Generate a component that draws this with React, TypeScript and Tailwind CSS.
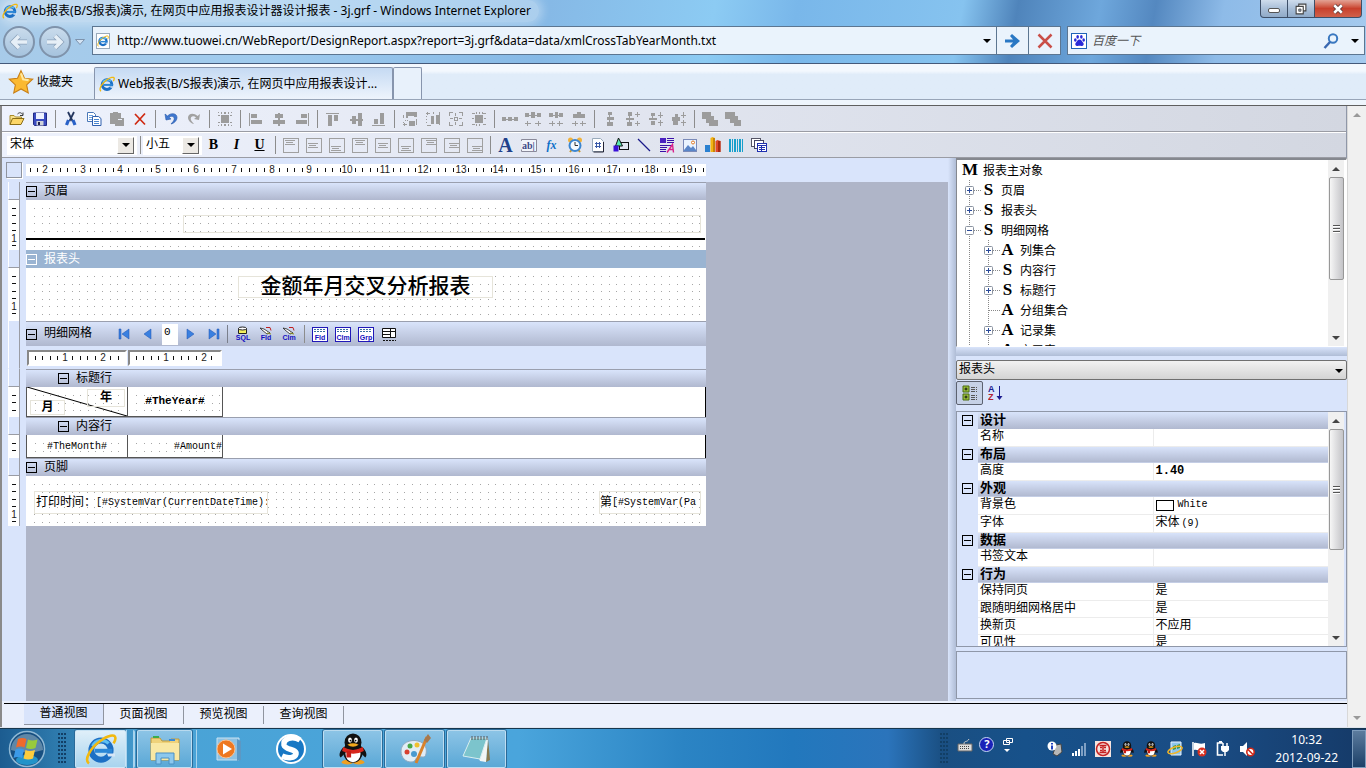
import { ReactNode, useState } from 'react';
import clsx from 'clsx';

const GRID = 7.56;
const song = "font-['Liberation_Mono','Noto_Sans_CJK_SC',monospace]";
const segoe = "font-['Noto_Sans','Noto_Sans_CJK_SC',sans-serif]";
const yahei = "font-['Noto_Sans_CJK_SC',sans-serif]";

/* ---------- icons ---------- */

function Icon({ children, size = 'w-4 h-4' }: { children: ReactNode; size?: string }) {
  return (
    <svg viewBox="0 0 16 16" className={clsx(size, 'shrink-0')} fill="none" aria-hidden="true">
      {children}
    </svg>
  );
}

function IeLogo({ size = 'w-4 h-4' }: { size?: string }) {
  return (
    <Icon size={size}>
      <circle cx="8" cy="8.6" r="4.8" stroke="#1c6fc4" strokeWidth="3" />
      <path d="M3.8 6.6a5 5 0 0 1 8-1.4" stroke="#5fc0f2" strokeWidth="1.6" />
      <path d="M5 8.9h8.6" stroke="#2a86d6" strokeWidth="2" />
      <path d="M11 10.2h4v1.6h-3.4z" fill="#d6e6f6" />
      <path d="M2 15.2C-.6 13.4 2.6 7.6 7.6 4 11.4 1.2 15 .4 15.2 2.4c.1.8-.3 1.8-.9 2.8" stroke="#f2b90f" strokeWidth="1.3" />
    </Icon>
  );
}

// grey pixel shapes of the disabled layout commands
const gray = (d: string) => (
  <Icon>
    <path d={d} fill="#9c9c9c" shapeRendering="crispEdges" />
  </Icon>
);

const bars = {
  left: 'M1 2h1v13h-1zM3 3h6v4h-6zM3 9h11v4h-11z',
  center: 'M7 2h2v13h-2zM4 3h8v4h-8zM2 9h12v4h-12z',
  right: 'M14 2h1v13h-1zM7 3h6v4h-6zM2 9h11v4h-11z',
  top: 'M1 2h13v1h-13zM3 4h4v11h-4zM9 4h4v6h-4z',
  middle: 'M2 8h13v2h-13zM4 5h4v8h-4zM10 2h4v13h-4z',
  bottom: 'M1 14h13v1h-13zM3 8h4v5h-4zM9 2h4v11h-4z',
};

const fileIcons = [
  {
    name: '打开',
    icon: (
      <Icon>
        <path d="M1 13.500V4.500h4l1.500 1.500h6v2" fill="#f7e08b" stroke="#a88a2a" />
        <path d="M1 13.500l2.500-6h11.500l-3 6z" fill="#fcd668" stroke="#8a6d17" />
        <path d="M8.500 3c2-2 4-1.500 5 .500M14 1.500v3h-3" stroke="#3c3c3c" />
      </Icon>
    ),
  },
  {
    name: '保存',
    icon: (
      <Icon>
        <path d="M1.500 2h13v12.500h-12l-1-1z" fill="#3a4cc0" stroke="#222a86" />
        <path d="M4 2h8v6h-8z" fill="#eef2ff" />
        <path d="M4.500 10h7v4.500h-7z" fill="#cfd3da" />
        <path d="M6 11h2v3h-2z" fill="#20204c" />
      </Icon>
    ),
  },
];

const editIcons = [
  {
    name: '剪切',
    icon: (
      <Icon>
        <path d="M5 1l4.500 9M11 1l-4.500 9" stroke="#24365e" strokeWidth="1.800" />
        <path d="M5.500 9l-2 5M10 9l2 5" stroke="#2a62c8" strokeWidth="3.200" />
      </Icon>
    ),
  },
  {
    name: '复制',
    icon: (
      <Icon>
        <path d="M1.500 1.500h6l2 2v7h-8z" fill="#fff" stroke="#4a78b8" />
        <path d="M3 4.500h4M3 6.500h5M3 8.500h4" stroke="#6fa0dc" />
        <path d="M6.500 5.500h6l2.500 2v7h-8.500z" fill="#fff" stroke="#2f5fae" />
        <path d="M8 8.500h5M8 10.500h5M8 12.500h5" stroke="#4a86d0" />
      </Icon>
    ),
  },
  { name: '粘贴', icon: gray('M1 2h3v-1h5v1h3v5h3v8h-9v-2h-5zM9 8v1h4v-1zM10 12h3v1h-3z') },
  {
    name: '删除',
    icon: (
      <Icon>
        <path d="M3 3l10 10.500M13 2.500L3 13.500" stroke="#cf2a12" strokeWidth="1.700" />
      </Icon>
    ),
  },
];

const undoIcons = [
  {
    name: '撤销',
    icon: (
      <Icon>
        <path d="M2 3l1 6 5-1-2-1.600c3-2.400 6.200-.4 5 2.600-.5 1.600-2 2.600-3 4 3-.6 6-3.400 6-6.500C14 2.500 8.500 1 4.500 5z" fill="#3f77cf" stroke="#2557a8" strokeWidth=".6" />
      </Icon>
    ),
  },
  {
    name: '重做',
    icon: (
      <Icon>
        <path d="M14 3l-1 6-5-1 2-1.600c-3-2.400-6.200-.4-5 2.600.5 1.600 2 2.600 3 4-3-.6-6-3.400-6-6.500C2 2.500 7.500 1 11.500 5z" fill="#a2a2a2" />
      </Icon>
    ),
  },
];

const boxIcon = gray(
  'M4 4h8v8h-8zM1 4h2v1h-2zM1 11h2v1h-2zM13 4h2v1h-2zM13 11h2v1h-2zM4 1h1v2h-1zM11 1h1v2h-1zM4 13h1v2h-1zM11 13h1v2h-1zM1 1h1v1h-1zM14 1h1v1h-1zM1 14h1v1h-1zM14 14h1v1h-1zM7 1h2v2h-2zM7 13h2v2h-2z',
);

type Tool = { name: string; icon: ReactNode };

const layoutGroups: Tool[][] = [
  [{ name: '选择', icon: boxIcon }],
  [
    { name: '左对齐', icon: gray(bars.left) },
    { name: '水平居中', icon: gray(bars.center) },
    { name: '右对齐', icon: gray(bars.right) },
  ],
  [
    { name: '顶对齐', icon: gray(bars.top) },
    { name: '垂直居中', icon: gray(bars.middle) },
    { name: '底对齐', icon: gray(bars.bottom) },
  ],
  [
    { name: '等宽', icon: gray('M4 1h11v5h-3v-1h-6v2h-2zM1 4h1v3h-1zM3 9h1v1h-1zM5 9h1v1h-1zM7 10h6v5h-6zM1 11h1v1h-1zM1 13h4v1h-4zM14 8h1v6h-1zM2 12h1v3h-1z') },
    { name: '等高', icon: gray('M11 4h3v9h-3zM14 1h1v13h-1zM6 5h3v8h-3zM1 2h4v1h-4zM2 1h1v3h-1zM1 5h1v1h-1zM1 8h1v1h-1zM1 11h1v1h-1zM2 14h4v1h-4zM8 1h1v2h-1z') },
    { name: '等大小', icon: gray('M1 1h4v1h-3v3h-1zM11 1h4v4h-1v-3h-3zM1 11h1v3h3v1h-4zM14 11h1v4h-4v-1h3zM6 6h4v1h-4zM6 9h4v1h-4zM6 7h1v2h-1zM9 7h1v2h-1zM7 2h1v3h-1zM7 11h1v3h-1zM2 7h3v1h-3zM11 7h3v1h-3z') },
    { name: '适应网格', icon: gray('M4 4h8v8h-8zM1 2h3v1h-3zM12 2h3v1h-3zM1 7h2v1h-2zM13 7h2v1h-2zM1 13h3v1h-3zM12 13h3v1h-3zM5 1h1v2h-1zM8 1h1v2h-1zM11 1h1v2h-1zM5 13h1v2h-1zM8 13h1v2h-1z') },
  ],
  [
    { name: '水平间距相等', icon: gray('M0 6h4v4h-4zM4 8h2v1h-2zM6 6h4v4h-4zM10 8h2v1h-2zM12 6h4v4h-4z') },
    { name: '增加水平间距', icon: gray('M0 2h4v4h-4zM4 4h2v1h-2zM6 1h4v6h-4zM10 4h2v1h-2zM12 2h4v4h-4zM0 12h6v1h-6zM2 10h1v5h-1zM10 12h6v1h-6zM13 10h1v5h-1z') },
    { name: '减小水平间距', icon: gray('M1 2h4v4h-4zM5 4h7v1h-7zM7 1h3v6h-3zM11 2h4v4h-4zM1 12h6v1h-6zM4 10h1v5h-1zM9 12h6v1h-6zM11 10h1v5h-1z') },
    { name: '移除水平间距', icon: gray('M2 3h4v4h-4zM6 1h4v6h-4zM10 3h4v4h-4zM1 12h6v1h-6zM4 10h1v5h-1zM9 12h6v1h-6zM11 10h1v5h-1z') },
  ],
  [
    { name: '垂直间距相等', icon: gray('M6 1h4v3h-4zM7 4h1v2h-1zM5 6h7v3h-7zM7 9h1v2h-1zM5 11h6v4h-6z') },
    { name: '增加垂直间距', icon: gray('M3 1h4v4h-4zM4 5h1v2h-1zM1 7h8v2h-8zM4 9h1v2h-1zM2 11h5v4h-5zM12 1h1v5h-1zM10 3h5v1h-5zM12 10h1v5h-1zM10 12h5v1h-5z') },
    { name: '减小垂直间距', icon: gray('M3 2h4v3h-4zM4 5h1v2h-1zM1 7h8v2h-8zM3 10h4v4h-4zM12 1h1v6h-1zM10 4h5v1h-5zM12 9h1v6h-1zM10 11h5v1h-5z') },
    { name: '移除垂直间距', icon: gray('M4 3h3v3h-3zM1 6h8v4h-8zM2 10h5v4h-5zM12 1h1v6h-1zM10 4h5v1h-5zM12 9h1v6h-1zM10 11h5v1h-5z') },
  ],
  [
    { name: '置前', icon: gray('M0 1h9v4h3v4h4v6h-9v-3h-3v-4h-4z') },
    { name: '置后', icon: gray('M0 1h10v4h3v4h3v6h-7v-3h-4v-4h-5z') },
  ],
];

// text anchor boxes: three horizontal x three vertical positions
const anchors = ['左上', '左中', '左下', '中上', '中中', '中下', '右上', '右中', '右下'];
const anchorX = [2.5, 4, 5.5];
const anchorY = [3.5, 6.5, 9.5];

const anchorIcon = (i: number) => {
  const x = anchorX[Math.floor(i / 3)];
  const y = anchorY[i % 3];
  return (
    <Icon>
      <rect x=".5" y="1.500" width="15" height="14" stroke="#a0a0a0" />
      <path d={`M${x - 1} ${y}h10M${x} ${y + 2}h7M${x - 1} ${y + 4}h10`} stroke="#a0a0a0" shapeRendering="crispEdges" />
    </Icon>
  );
};

const insertTools: Tool[] = [
  { name: '静态框', icon: <span className="font-['Liberation_Serif',serif] text-xl leading-4 font-bold text-[#20408a]">A</span> },
  {
    name: '字段框',
    icon: (
      <Icon>
        <path d="M.5 4v-1.500h15v12h-15v-2" fill="#f2f4fa" stroke="#8a8a9a" />
        <text x="1" y="12" fontSize="10" fontWeight="bold" fontFamily="Liberation Serif" fill="#3c4a86">ab|</text>
      </Icon>
    ),
  },
  { name: '综合文本', icon: <span className="font-['Liberation_Serif',serif] text-xs leading-4 font-bold text-[#1070c8] italic">fx</span> },
  {
    name: '系统变量',
    icon: (
      <Icon>
        <circle cx="3.500" cy="3" r="2.500" fill="#f0b23c" />
        <circle cx="12.500" cy="3" r="2.500" fill="#f0b23c" />
        <path d="M3 15l2-2.500M13 15l-2-2.500" stroke="#c8962c" strokeWidth="2" />
        <circle cx="8" cy="8.500" r="5.500" fill="#f4faff" stroke="#3c86d0" strokeWidth="2" />
        <path d="M8 5v3.500h3" stroke="#333" />
      </Icon>
    ),
  },
  {
    name: '页码',
    icon: (
      <Icon>
        <path d="M2.500 1.500h8l3 3v10h-11z" fill="#fff" stroke="#9ab" />
        <path d="M13.500 5v10h-10" stroke="#223" />
        <path d="M6.500 5v6M9.500 5v6M5 6.500h6M5 9.500h6" stroke="#3a5aa8" />
      </Icon>
    ),
  },
  {
    name: '图形',
    icon: (
      <Icon>
        <rect x="6.500" y="5.500" width="9" height="7" stroke="#111" />
        <path d="M5.500 1l4 8h-7z" fill="#58e8b0" stroke="#111" />
        <path d="M.5 8.500h5v6h-5z" fill="#3a10d8" />
      </Icon>
    ),
  },
  {
    name: '线段',
    icon: (
      <Icon>
        <path d="M2 2l12 12" stroke="#1a1a8a" strokeWidth="1.300" />
      </Icon>
    ),
  },
  {
    name: '富文本',
    icon: (
      <Icon>
        <path d="M1 1h6v5h-6z" fill="#4a20c0" />
        <path d="M8 1.500h7M8 3.500h7M8 5.500h7M1 8.500h12M1 10.500h7M1 12.500h6M1 14.500h6" stroke="#3a10a8" />
        <path d="M8 15.500l5.500-8 1 8M10 12.500h4" stroke="#d8208a" strokeWidth="1.400" />
      </Icon>
    ),
  },
  {
    name: '图像',
    icon: (
      <Icon>
        <rect x="1.500" y="2.500" width="13" height="12" fill="#eaf4ff" stroke="#7a8ab8" />
        <path d="M2 13l4-5 3 3 2-2 3 4v1h-12z" fill="#5a86c8" />
        <circle cx="11" cy="5.500" r="1.500" fill="#fff" stroke="#e07820" />
      </Icon>
    ),
  },
  {
    name: '图表',
    icon: (
      <Icon>
        <path d="M0 8h5v7h-5z" fill="#2a80d0" />
        <path d="M5.500 1l2-1 2.500 1v14h-4.500z" fill="#f2b414" />
        <path d="M8 1v14h2v-14z" fill="#c88408" />
        <path d="M10.500 4l2-1 3 1v11h-5z" fill="#e0482a" />
        <path d="M13 4v11h2.500v-11z" fill="#a82a10" />
      </Icon>
    ),
  },
  {
    name: '条形码',
    icon: (
      <Icon>
        <path d="M1 2h2v13h-2zM4 2h1v13h-1zM6 2h2v13h-2zM9 2h1v13h-1zM11 2h2v13h-2zM14 2h1v13h-1z" fill="#18a0cc" />
      </Icon>
    ),
  },
  {
    name: '子报表',
    icon: (
      <Icon>
        <rect x=".5" y="1.500" width="9" height="8" fill="#fff" stroke="#556" />
        <rect x="3.500" y="3.500" width="9" height="8" fill="#fff" stroke="#446" />
        <rect x="6.500" y="6.500" width="9" height="8" fill="#fff" stroke="#2030b0" />
        <path d="M7 8.500h8M8 10.500h6M8 12.500h6M10.500 9v5" stroke="#2030b0" />
      </Icon>
    ),
  },
];

/* ---------- toolbar ---------- */

const Separator = () => <span className="mr-[3px] ml-1 h-[18px] w-px shrink-0 bg-[#8c8c8c]" />;

function ToolButton({ name, icon }: Tool) {
  return (
    <button title={name} aria-label={name} className="flex h-5 w-[23px] shrink-0 items-center justify-center">
      {icon}
    </button>
  );
}

function ToolGroup({ tools }: { tools: Tool[] }) {
  return (
    <>
      {tools.map((t) => (
        <ToolButton key={t.name} {...t} />
      ))}
    </>
  );
}

function FontSelect({ label, value, width }: { label: string; value: string; width: string }) {
  return (
    <div className={clsx('relative shrink-0', width)}>
      <select aria-label={label} className="block h-[19px] w-full appearance-none bg-white pl-[3px] text-xs leading-4 outline-none">
        <option>{value}</option>
      </select>
      <span className="pointer-events-none absolute top-px right-[3px] flex h-[17px] w-[17px] items-center justify-center border border-t-white border-r-[#666] border-b-[#666] border-l-white bg-[#ece9e4]">
        <Down />
      </span>
    </div>
  );
}

const Down = ({ color = '#000' }: { color?: string }) => (
  <svg viewBox="0 0 8 4" className="h-1 w-2" aria-hidden="true">
    <path d="M0 0h8L4 4z" fill={color} />
  </svg>
);

const Up = ({ color = '#444' }: { color?: string }) => (
  <svg viewBox="0 0 8 4" className="h-1 w-2" aria-hidden="true">
    <path d="M0 4h8L4 0z" fill={color} />
  </svg>
);

function Toolbars() {
  return (
    <div className={clsx('border-r border-[#8f97a8]', song)}>
      <div className="flex h-[26px] items-center overflow-hidden border-b border-[#9a9ca4] bg-linear-to-r from-[#eef2fd] to-[#d3d7e1] px-[3px]">
        <ToolGroup tools={fileIcons} />
        <Separator />
        <ToolGroup tools={editIcons} />
        <Separator />
        <ToolGroup tools={undoIcons} />
        {layoutGroups.map((group, i) => (
          <div key={i} className="flex items-center">
            <Separator />
            <ToolGroup tools={group} />
          </div>
        ))}
      </div>
      <div className="flex h-[26px] items-center overflow-hidden border-t border-b border-t-white border-b-[#9a9ca4] bg-linear-to-r from-[#eef2fd] to-[#d3d7e1] px-[5px]">
        <FontSelect label="字体" value="宋体" width="w-[130px]" />
        <span className="mr-0.5 ml-[3px] h-[18px] w-px bg-[#8c8c8c]" />
        <FontSelect label="字号" value="小五" width="w-[59px]" />
        <button className="w-[23px] font-['Liberation_Serif',serif] text-sm leading-5 font-black">B</button>
        <button className="w-[23px] font-['Liberation_Serif',serif] text-sm leading-5 font-bold italic">I</button>
        <button className="w-[23px] font-['Liberation_Serif',serif] text-sm leading-5 font-bold underline">U</button>
        <Separator />
        <ToolGroup tools={anchors.map((name, i) => ({ name, icon: anchorIcon(i) }))} />
        <Separator />
        <ToolGroup tools={insertTools} />
      </div>
    </div>
  );
}

/* ---------- rulers and grid ---------- */

function HRuler({ width, first, zero }: { width: number; first: number; zero: number }) {
  const marks = [];
  for (let i = 0; zero + i * GRID < width - 2; i++) {
    const x = Math.round(zero + i * GRID);
    if (x < 2) continue;
    if (i % 5 === 0 && i > 0) {
      marks.push(
        <text key={i} x={x} y="9" textAnchor="middle" fontSize="10" fontFamily="Liberation Sans" fill="#222">
          {first + i / 5}
        </text>,
      );
    } else {
      marks.push(<rect key={i} x={x} y="4" width="1" height="4" fill="#111" />);
    }
  }
  return (
    <svg width={width} height="12" className="block bg-white" aria-hidden="true">
      {marks}
    </svg>
  );
}

function VRuler({ height }: { height: number }) {
  const marks = [];
  for (let i = 1; i * GRID < height - 3; i++) {
    const y = Math.round(i * GRID);
    if (i === 5) {
      marks.push(
        <text key={i} x="6" y={y + 4} textAnchor="middle" fontSize="10" fontFamily="Liberation Sans" fill="#222">
          1
        </text>,
      );
    } else {
      marks.push(<rect key={i} x="4" y={y} width="4" height="1" fill="#111" />);
    }
  }
  return (
    <svg width="11" height={height} className="block bg-white" aria-hidden="true">
      {marks}
    </svg>
  );
}

function Dots({ cols, rows, skip }: { cols: number; rows: number; skip?: number }) {
  let d = '';
  for (let r = 0; r < rows; r++) {
    if (r === skip) continue;
    for (let c = 0; c < cols; c++) {
      d += `M${Math.round(8 + c * GRID)} ${Math.round(8 + r * GRID)}h1v1h-1z`;
    }
  }
  return (
    <svg className="pointer-events-none absolute inset-0 h-full w-full" aria-hidden="true">
      <path d={d} fill="#a6a6a6" shapeRendering="crispEdges" />
    </svg>
  );
}

const Minus = ({ light }: { light?: boolean }) => (
  <button
    aria-label="折叠"
    className={clsx('flex h-[11px] w-[11px] shrink-0 items-center justify-center border', light ? 'border-white' : 'border-black')}
  >
    <span className={clsx('h-px w-[7px]', light ? 'bg-white' : 'bg-black')} />
  </button>
);

interface BandProps {
  title: string;
  height: number;
  headHeight?: string;
  indent?: boolean;
  selected?: boolean;
  tools?: ReactNode;
  ruler?: ReactNode;
  children?: ReactNode;
}

function Band({ title, height, headHeight = 'h-[18px]', indent, selected, tools, ruler, children }: BandProps) {
  return (
    <section className="flex">
      <div className="flex w-6 shrink-0 flex-col bg-[#d9e4fb] pr-[6px] pl-[6px]">
        <div className={clsx('border-r border-b border-l border-[#9a9ca4] border-l-white bg-[#d9e4fb]', ruler ? 'flex-1 border-b-transparent' : headHeight)} />
        {height > 0 && (
          <div className="border-r border-[#9a9ca4]">
            <VRuler height={height} />
          </div>
        )}
      </div>
      <div className="w-[680px]">
        <div
          className={clsx(
            'flex items-center border-t',
            headHeight,
            selected ? 'border-[#9ab4d2] bg-[#9ab4d2] text-white' : 'border-[#9a9fae] bg-linear-to-b from-[#d9e4fb] to-[#b0b8cf]',
            indent && 'pl-8',
          )}
        >
          <Minus light={selected} />
          <h2 className="ml-[7px] text-xs leading-4 whitespace-nowrap">{title}</h2>
          {tools}
        </div>
        {ruler}
        {height > 0 && (
          <div className="relative overflow-hidden bg-white" style={{ height }}>
            {children}
          </div>
        )}
      </div>
    </section>
  );
}

/* ---------- detail grid commands ---------- */

const navShape = { first: 'M3 3h2v10h-2zM13 3v10l-7-5z', prev: 'M11 3v10l-7-5z', next: 'M5 3v10l7-5z', last: 'M11 3h2v10h-2zM3 3v10l7-5z' };

const NavButton = ({ kind, label }: { kind: keyof typeof navShape; label: string }) => (
  <button aria-label={label} className="flex w-6 justify-center">
    <Icon>
      <path d={navShape[kind]} fill="#3a80e0" stroke="#1c50b0" strokeWidth=".5" />
    </Icon>
  </button>
);

const TagIcon = ({ text, kind }: { text: string; kind: 'sql' | 'pen' | 'grid' }) => (
  <Icon>
    {kind === 'sql' && (
      <>
        <path d="M3.500 2.500h8v5h-8z" fill="#f4f060" stroke="#222" />
        <ellipse cx="7.500" cy="2.500" rx="4" ry="1.500" fill="#fff" stroke="#222" />
      </>
    )}
    {kind === 'pen' && (
      <>
        <path d="M2 2l4 1 6 4-3 1-5-4z" fill="#fff" stroke="#222" strokeWidth=".8" />
        <path d="M8 1.500h4l1 3" stroke="#c02020" />
        <path d="M9 7l4 1" stroke="#8a8a20" />
      </>
    )}
    {kind === 'grid' && (
      <>
        <rect x=".5" y="1.500" width="15" height="14" fill="#fff" stroke="#2018b8" />
        <path d="M2 3.500h12M2 5.500h12" stroke="#3a70a0" strokeDasharray="2 1" />
      </>
    )}
    <text x="8" y="14" textAnchor="middle" fontSize="7" fontWeight="bold" fontFamily="Liberation Sans" fill="#1410c0">
      {text}
    </text>
  </Icon>
);

function DetailTools() {
  const button = 'flex w-[23px] justify-center';
  return (
    <div className="ml-5 flex items-center">
      <NavButton kind="first" label="第一条" />
      <NavButton kind="prev" label="上一条" />
      <input aria-label="记录号" defaultValue="0" className="ml-0.5 h-[21px] w-4 bg-white pb-1 pl-0.5 text-[11px] outline-none" />
      <NavButton kind="next" label="下一条" />
      <NavButton kind="last" label="最后一条" />
      <span className="mr-[3px] ml-px h-[18px] w-px bg-[#7a7f8c]" />
      <button className={button}><TagIcon text="SQL" kind="sql" /></button>
      <button className={button}><TagIcon text="Fld" kind="pen" /></button>
      <button className={button}><TagIcon text="Clm" kind="pen" /></button>
      <Separator />
      <button className={button}><TagIcon text="Fld" kind="grid" /></button>
      <button className={button}><TagIcon text="Clm" kind="grid" /></button>
      <button className={button}><TagIcon text="Grp" kind="grid" /></button>
      <button aria-label="交叉表" className={button}>
        <Icon>
          <path d="M1.500 2.500h13v9h-13zM1.500 5.500h13M1.500 8.500h8M9.500 2.500v9" fill="#fff" stroke="#111" />
          <path d="M2 14.500h13" stroke="#111" strokeDasharray="2 1" />
        </Icon>
      </button>
    </div>
  );
}

const cell = 'relative overflow-hidden border-r border-b border-[#555] bg-white';
const textBox = 'absolute border border-[#e6e4da]';

function Designer() {
  return (
    <div className={clsx('flex min-w-0 flex-1 flex-col bg-[#d9e4fb] text-black', song)}>
      <div className="flex h-6 items-center">
        <div className="mr-1 ml-1 h-4 w-4 border border-[#8f949f] shadow-[1px_1px_0_#fff]" />
        <HRuler width={680} first={1} zero={-19} />
      </div>
      <div className="flex min-h-0 flex-1 flex-col bg-[#afb5c8]">
        <Band title="页眉" height={50}>
          <Dots cols={89} rows={6} skip={4} />
          <div className={clsx(textBox, 'top-[15px] right-[5px] left-[157px] h-[18px]')} />
          <div className="absolute inset-x-0 top-[38px] mr-px h-0.5 bg-black" />
        </Band>
        <Band title="报表头" height={53} selected>
          <Dots cols={89} rows={6} />
          <div className={clsx(textBox, 'top-2 left-[212px] h-[22px] w-[255px] text-center text-[21px] leading-[22px] font-medium')}>
            金额年月交叉分析报表
          </div>
        </Band>
        <Band
          title="明细网格"
          height={0}
          headHeight="h-[25px]"
          tools={<DetailTools />}
          ruler={
            <div className="flex h-[23px] items-center gap-px bg-[#d9e4fb] pl-px">
              <div className="border-2 border-[#888] border-r-white border-b-white"><HRuler width={96} first={0} zero={-2} /></div>
              <div className="border-2 border-[#888] border-r-white border-b-white"><HRuler width={90} first={0} zero={-2} /></div>
            </div>
          }
        />
        <Band title="标题行" height={30} indent>
          <div className="flex h-full border-r border-black">
            <div className={clsx(cell, 'w-[102px] border-l')}>
              <Dots cols={12} rows={3} />
              <svg className="absolute inset-0 h-full w-full" viewBox="0 0 100 29" preserveAspectRatio="none" aria-hidden="true">
                <path d="M0 0l100 29" stroke="#000" />
              </svg>
              <span className={clsx(textBox, 'top-[2px] right-[2px] h-[18px] w-[38px] text-center text-xs leading-4 font-bold')}>年</span>
              <span className={clsx(textBox, 'bottom-px left-[3px] h-[15px] w-[35px] text-center text-xs leading-[14px] font-bold')}>月</span>
            </div>
            <div className={clsx(cell, 'w-[95px] text-center text-[11px] leading-[28px] font-bold')}>
              <Dots cols={12} rows={3} />
              #TheYear#
            </div>
          </div>
        </Band>
        <Band title="内容行" height={23} indent>
          <div className="flex h-full border-r border-black text-[10px] leading-[23px]">
            <div className={clsx(cell, 'w-[102px] border-l text-center')}>
              <Dots cols={12} rows={2} />
              #TheMonth#
            </div>
            <div className={clsx(cell, 'w-[95px] text-right')}>
              <Dots cols={12} rows={2} />
              #Amount#
            </div>
          </div>
        </Band>
        <Band title="页脚" height={50}>
          <Dots cols={89} rows={6} />
          <div className={clsx(textBox, 'top-[15px] left-2 flex h-[23px] w-[234px] items-center overflow-hidden pl-px whitespace-nowrap')}>
            <span className="text-xs">打印时间：</span>
            <span className="text-[10px]">[#SystemVar(CurrentDateTime):</span>
          </div>
          <div className={clsx(textBox, 'top-[15px] right-[5px] flex h-[23px] w-[102px] items-center overflow-hidden whitespace-nowrap')}>
            <span className="text-xs">第</span>
            <span className="text-[10px]">[#SystemVar(Pa</span>
          </div>
        </Band>
        <div className="w-6 flex-1 self-start bg-[#d9e4fb]" />
      </div>
    </div>
  );
}

/* ---------- right side ---------- */

function ScrollBar({ thumb }: { thumb: string }) {
  return (
    <div className="mr-0.5 flex w-4 shrink-0 flex-col items-center bg-[#f0f0f0]">
      <button aria-label="向上滚动" className="flex h-[17px] w-full items-center justify-center"><Up /></button>
      <div className={clsx('flex w-[15px] flex-col items-center justify-center gap-px rounded-xs border border-[#989898] bg-linear-to-r from-[#f6f6f6] to-[#c4c4c8]', thumb)}>
        <span className="h-0.5 w-[7px] border-b border-white bg-[#555]" />
        <span className="h-0.5 w-[7px] border-b border-white bg-[#555]" />
        <span className="h-0.5 w-[7px] border-b border-white bg-[#555]" />
      </div>
      <span className="flex-1" />
      <button aria-label="向下滚动" className="flex h-[17px] w-full items-center justify-center"><Down color="#444" /></button>
    </div>
  );
}

interface Node {
  kind: 'M' | 'S' | 'A';
  label: string;
  level: number;
  mark?: '+' | '-';
}

const tree: Node[] = [
  { kind: 'M', label: '报表主对象', level: 0 },
  { kind: 'S', label: '页眉', level: 1, mark: '+' },
  { kind: 'S', label: '报表头', level: 1, mark: '+' },
  { kind: 'S', label: '明细网格', level: 1, mark: '-' },
  { kind: 'A', label: '列集合', level: 2, mark: '+' },
  { kind: 'S', label: '内容行', level: 2, mark: '+' },
  { kind: 'S', label: '标题行', level: 2, mark: '+' },
  { kind: 'A', label: '分组集合', level: 2 },
  { kind: 'A', label: '记录集', level: 2, mark: '+' },
  { kind: 'A', label: '交叉表', level: 2 },
];

function Branch({ mark }: { mark?: '+' | '-' }) {
  return (
    <svg width="19" height="20" viewBox="0 0 19 20" className="shrink-0" aria-hidden="true">
      <path d="M7.500 0v20M8 10.500h11" stroke="#888" strokeDasharray="1 1" fill="none" />
      {mark && (
        <>
          <rect x="3.500" y="6.500" width="8" height="8" rx="1" fill="#fff" stroke="#8a93a0" />
          <path d={mark === '+' ? 'M5 10.500h5M7.500 8v5' : 'M5 10.500h5'} stroke="#2a4a9a" />
        </>
      )}
    </svg>
  );
}

const TreeRow = ({ node }: { node: Node }) => (
  <li className="flex h-5 shrink-0 items-center pl-[5px]">
    {node.level === 2 && (
      <svg width="19" height="20" className="shrink-0" aria-hidden="true">
        <path d="M7.500 0v20" stroke="#888" strokeDasharray="1 1" />
      </svg>
    )}
    {node.level > 0 && <Branch mark={node.mark} />}
    <span className={clsx("text-center font-['Liberation_Serif',serif] text-[17px] leading-5 font-semibold", node.level > 0 ? 'w-[15px]' : 'w-4')}>
      {node.kind}
    </span>
    <span className="ml-[5px] text-xs leading-5">{node.label}</span>
  </li>
);

type Prop = { name: string; value?: ReactNode; bold?: boolean };

const properties: { title: string; rows: Prop[] }[] = [
  { title: '设计', rows: [{ name: '名称' }] },
  { title: '布局', rows: [{ name: '高度', value: '1.40', bold: true }] },
  {
    title: '外观',
    rows: [
      {
        name: '背景色',
        value: (
          <span className="flex items-center gap-1 text-[10px]">
            <span className="h-[11px] w-[18px] border border-black bg-white" />
            White
          </span>
        ),
      },
      { name: '字体', value: <>宋体<span className="ml-0.5 text-[10px]">(9)</span></> },
    ],
  },
  { title: '数据', rows: [{ name: '书签文本' }] },
  {
    title: '行为',
    rows: [
      { name: '保持同页', value: '是' },
      { name: '跟随明细网格居中', value: '是' },
      { name: '换新页', value: '不应用' },
      { name: '可见性', value: '是' },
    ],
  },
];

function PropertyTable() {
  return (
    <table className="w-full table-fixed border-collapse text-xs leading-4">
      <colgroup>
        <col className="w-[21px]" />
        <col />
        <col />
      </colgroup>
      {properties.map((group) => (
        <tbody key={group.title}>
          <tr className="h-[17px]">
            <td className="p-0 pl-[5px]"><Minus /></td>
            <th colSpan={2} className="bg-linear-to-b from-[#d9e4fb] to-[#b0b8cf] p-0 pl-0.5 text-left text-[13px] leading-4 font-bold">
              {group.title}
            </th>
          </tr>
          {group.rows.map((row) => (
            <tr key={row.name} className="h-[17px]">
              <td className="p-0" />
              <td className="border-r border-b border-[#ececec] bg-white p-0 pl-0.5 whitespace-nowrap">{row.name}</td>
              <td className={clsx('border-b border-[#ececec] bg-white p-0 pl-0.5', row.bold && 'font-bold')}>{row.value}</td>
            </tr>
          ))}
        </tbody>
      ))}
    </table>
  );
}

function SidePanel() {
  return (
    <aside className={clsx('flex w-[391px] shrink-0 flex-col bg-[#d9e4fb] text-black', song)}>
      <div className="flex h-[189px] border border-t-2 border-[#85888f] border-r-white border-b-white bg-white">
        <ul className={clsx('flex min-w-0 flex-1 flex-col overflow-hidden', yahei)}>
          {tree.map((n) => (
            <TreeRow key={n.label} node={n} />
          ))}
        </ul>
        <ScrollBar thumb="h-[103px]" />
      </div>
      <div className="mb-1 h-[9px] bg-linear-to-b from-[#d9e4fb] to-[#b0bdd6]" />
      <div className="relative">
        <select
          aria-label="对象"
          className="block h-5 w-full appearance-none rounded-xs border border-[#707070] bg-linear-to-b from-[#f2f2f2] to-[#d4d4d4] pl-0.5 text-xs leading-4"
        >
          <option>报表头</option>
        </select>
        <span className="pointer-events-none absolute top-[9px] right-1 flex"><Down /></span>
      </div>
      <div className="flex h-[31px] items-start gap-0.5 pt-px">
        <button aria-label="按分类" className="flex h-6 w-[27px] items-center justify-center rounded-xs border border-[#5c6270] bg-[#c6d1e6]">
          <Icon>
            <path d="M1 1h6v6h-6zM1 9h6v6h-6z" fill="#9ac03a" stroke="#4a6a10" />
            <path d="M2.500 4h3M4 2.500v3M2.500 12h3M4 10.500v3" stroke="#111" />
            <path d="M9 2.500h6M9 4.500h6M9 6.500h6M9 10.500h6M9 12.500h6M9 14.500h6" stroke="#555" strokeDasharray="4 1" />
          </Icon>
        </button>
        <button aria-label="按字母" className="flex h-6 w-[22px] items-center justify-center">
          <svg viewBox="0 0 16 20" className="h-5 w-4" aria-hidden="true">
            <text x="0" y="9" fontSize="9" fontWeight="bold" fontFamily="Liberation Sans" fill="#1c1c90">A</text>
            <text x="0" y="17" fontSize="9" fontWeight="bold" fontFamily="Liberation Sans" fill="#b02030">Z</text>
            <path d="M11.500 3v11" stroke="#1c1c90" />
            <path d="M8.500 13h6l-3 4z" fill="#1c1c90" />
          </svg>
        </button>
      </div>
      <div className="flex min-h-0 flex-1 border border-[#8f97a8]">
        <div className="min-w-0 flex-1 overflow-hidden"><PropertyTable /></div>
        <ScrollBar thumb="h-[121px]" />
      </div>
      <div className="my-1 mb-0.5 h-12 border border-[#8f97a8]" />
    </aside>
  );
}

/* ---------- browser chrome ---------- */

function TitleBar() {
  const btn = 'flex h-[18px] items-center justify-center border border-t-0 border-[#3d4f68]';
  return (
    <header className={clsx('flex h-[26px] items-start justify-between pl-0.5', segoe)}>
      <h1 className="flex h-[22px] items-center gap-[3px] rounded-full bg-white/30 pr-2 text-xs leading-5 whitespace-nowrap shadow-[0_0_8px_4px_rgba(255,255,255,0.3)]">
        <IeLogo />
        Web报表(B/S报表)演示, 在网页中应用报表设计器设计报表 - 3j.grf - Windows Internet Explorer
      </h1>
      <div className="mr-1 flex">
        <button aria-label="最小化" className={clsx(btn, 'w-7 rounded-bl-sm bg-linear-to-b from-[#cfdcec] via-[#a9bfd8] to-[#90aac8]')}>
          <span className="mt-1 h-[5px] w-3 rounded-xs border border-[#555] bg-white" />
        </button>
        <button aria-label="还原" className={clsx(btn, 'w-[27px] border-l-0 bg-linear-to-b from-[#cfdcec] via-[#a9bfd8] to-[#90aac8]')}>
          <Icon size="w-3 h-3">
            <path d="M5 1.500h9.500v9h-9.500z" fill="#fff" stroke="#444" strokeWidth="1.500" />
            <path d="M1.500 4.500h9.500v10h-9.500z" fill="#fff" stroke="#444" strokeWidth="1.500" />
            <path d="M5 8h3v3h-3z" fill="#9ab" stroke="#444" />
          </Icon>
        </button>
        <button aria-label="关闭" className={clsx(btn, 'w-[47px] rounded-br-sm border-l-0 bg-linear-to-b from-[#e2a294] via-[#c8402c] to-[#d0604a]')}>
          <Icon size="w-3 h-3">
            <path d="M3 3l10 10M13 3L3 13" stroke="#503030" strokeWidth="5.500" />
            <path d="M3 3l10 10M13 3L3 13" stroke="#fff" strokeWidth="3.500" />
          </Icon>
        </button>
      </div>
    </header>
  );
}

function NavArrow({ label, forward }: { label: string; forward?: boolean }) {
  return (
    <button aria-label={label} className="flex h-8 w-8 shrink-0 items-center justify-center rounded-full border-2 border-[#7f93ab] bg-linear-to-b from-[#c9dbec] to-[#a6c3de]">
      <svg viewBox="0 0 20 20" className="h-5 w-5" aria-hidden="true">
        <path d={forward ? 'M2 10h14M10 4l6 6-6 6' : 'M18 10H4M10 4l-6 6 6 6'} fill="none" stroke="#8ca2ba" strokeWidth="5" />
        <path d={forward ? 'M2 10h14M10 4l6 6-6 6' : 'M18 10H4M10 4l-6 6 6 6'} fill="none" stroke="#e6eff7" strokeWidth="3.500" />
      </svg>
    </button>
  );
}

function AddressBar() {
  const field = 'flex h-[29px] items-center border border-[#5c7691] bg-[#eaf3fc]';
  return (
    <div className={clsx('flex h-[37px] items-start pr-px pl-[3px]', segoe)}>
      <nav className="flex w-[89px] shrink-0 items-center gap-1">
        <NavArrow label="后退" />
        <NavArrow label="前进" forward />
        <svg viewBox="0 0 10 6" className="h-1.5 w-2.5" aria-hidden="true">
          <path d="M.5.5h9L5 5.500z" fill="#d4e4f4" stroke="#7d93ad" />
        </svg>
      </nav>
      <div className={clsx(field, 'min-w-0 flex-1')}>
        <span className="ml-[3px] flex h-4 w-3.5 items-center justify-center border border-[#9ab] bg-white">
          <IeLogo size="w-3 h-3" />
        </span>
        <input
          aria-label="地址"
          defaultValue="http://www.tuowei.cn/WebReport/DesignReport.aspx?report=3j.grf&data=data/xmlCrossTabYearMonth.txt"
          className="ml-[7px] min-w-0 flex-1 bg-transparent text-xs outline-none"
        />
        <button aria-label="地址列表" className="flex w-[18px] justify-center"><Down /></button>
        <button aria-label="转到" className="flex h-full w-8 items-center justify-center border-l border-[#5c7691]">
          <Icon>
            <path d="M0 6.500h8L5 3l2-2 8 7-8 7-2-2 3-3.500H0z" fill="#2a78c4" />
          </Icon>
        </button>
        <button aria-label="停止" className="flex h-full w-8 items-center justify-center border-l border-[#5c7691]">
          <Icon>
            <path d="M1.500 1.500l13 13M14.500 1.500l-13 13" stroke="#c94f48" strokeWidth="2.500" />
          </Icon>
        </button>
      </div>
      <div className={clsx(field, 'ml-[6px] w-[298px] shrink-0')}>
        <span className="ml-[3px] flex h-4 w-4 items-center justify-center border border-[#1e63b8] bg-white">
          <svg viewBox="0 0 14 14" className="h-[13px] w-[13px]" fill="#2a2ad8" aria-hidden="true">
            <ellipse cx="2.500" cy="6.500" rx="1.400" ry="1.900" />
            <ellipse cx="5" cy="3" rx="1.400" ry="2" />
            <ellipse cx="9" cy="3" rx="1.400" ry="2" />
            <ellipse cx="11.500" cy="6.500" rx="1.400" ry="1.900" />
            <path d="M7 6c2 0 2.500 2 4 3.500 1.500 2-.5 3.800-2 3.500-1.500-.4-2.500-.4-4 0-1.500.3-3.500-1.500-2-3.500C4.500 8 5 6 7 6z" />
          </svg>
        </span>
        <input aria-label="搜索" placeholder="百度一下" className="ml-[5px] min-w-0 flex-1 bg-transparent text-xs italic outline-none placeholder:text-[#555]" />
        <button aria-label="搜索" className="flex w-5 justify-center">
          <Icon>
            <circle cx="10" cy="5.500" r="4.200" stroke="#3a78c0" strokeWidth="2" />
            <path d="M7 9l-5.500 6" stroke="#3a68b0" strokeWidth="2.500" />
          </Icon>
        </button>
        <button aria-label="搜索选项" className="mr-px ml-1.5 flex w-4 justify-center"><Down /></button>
      </div>
    </div>
  );
}

function TabBar() {
  return (
    <div className={clsx('flex h-[37px] items-end border-t border-b border-t-[#44597a] border-b-[#98a5b8] bg-linear-to-b from-[#f3f8fe] from-20% to-[#e0ecf9] to-30% text-xs', segoe)}>
      <button className="flex h-full w-[94px] items-center gap-[3px] pl-2 whitespace-nowrap">
        <svg viewBox="0 0 24 24" className="h-[26px] w-[26px]" aria-hidden="true">
          <path d="M12 1.500l3.200 7 7.600.9-5.600 5.200 1.500 7.500-6.700-3.700-6.700 3.700 1.500-7.500L1.200 9.400l7.600-.9z" fill="#fbb931" stroke="#c87f16" />
          <path d="M12 4l2 5.500 5 .8" fill="none" stroke="#ffe9a0" strokeWidth="2" />
        </svg>
        收藏夹
      </button>
      <div role="tab" className="flex h-8 w-[299px] items-center gap-[3px] rounded-t-xs border border-b-0 border-[#8795ad] bg-linear-to-b from-[#c5daf3] to-[#eef4fc] pl-1 whitespace-nowrap">
        <IeLogo />
        Web报表(B/S报表)演示, 在网页中应用报表设计...
      </div>
      <button aria-label="新选项卡" className="h-8 w-[29px] rounded-t-xs border border-b-0 border-[#8795ad] bg-[#e8f1fb]" />
    </div>
  );
}

/* ---------- taskbar ---------- */

const Penguin = ({ size }: { size: string }) => (
  <svg viewBox="0 0 32 34" className={size} aria-hidden="true">
    <ellipse cx="10" cy="31" rx="6" ry="2.500" fill="#f0a020" />
    <ellipse cx="22" cy="31" rx="6" ry="2.500" fill="#f0a020" />
    <path d="M6 15C1 20 1 25 3 26l4-4M26 15c5 5 5 10 3 11l-4-4" fill="#111" />
    <ellipse cx="16" cy="20" rx="10.500" ry="11.500" fill="#111" />
    <ellipse cx="16" cy="22" rx="8" ry="9" fill="#fff" />
    <ellipse cx="16" cy="10" rx="9" ry="9.500" fill="#111" />
    <ellipse cx="12.800" cy="7.500" rx="2" ry="2.800" fill="#fff" />
    <ellipse cx="19.200" cy="7.500" rx="2" ry="2.800" fill="#fff" />
    <circle cx="13.300" cy="8" r=".9" fill="#111" />
    <circle cx="18.800" cy="8" r=".9" fill="#111" />
    <path d="M10 12.500q6-3 12 0-6 4-12 0z" fill="#f4a81c" />
    <path d="M5.500 15q10.500 6 21 0l1 4q-11 6-23 0z" fill="#d8261c" />
    <path d="M9 19h5v7h-5z" fill="#c41c14" />
  </svg>
);

function Grip() {
  return (
    <svg width="9" height="32" className="shrink-0" aria-hidden="true">
      {[0, 1, 2, 3, 4, 5, 6, 7].map((r) => (
        <path key={r} d={`M0 ${r * 4}h2v2h-2zM3 ${r * 4}h2v2h-2zM6 ${r * 4}h2v2h-2z`} fill="#123f66" />
      ))}
    </svg>
  );
}

const task = 'flex h-[38px] items-center justify-center rounded-xs border border-[#cfe6f5]/80 bg-linear-to-b shadow-[0_0_0_1px_#2a6a98]';
const taskIdle = 'from-[#8cc4e6] to-[#5aa8d6]';

const trayIcons: Tool[] = [
  {
    name: '信息',
    icon: (
      <Icon>
        <path d="M9 4l5-1 1 8-5 4-4-2z" fill="#b8b8b8" stroke="#444" />
        <circle cx="5" cy="5" r="4.500" fill="#fff" />
        <path d="M5 2v1.500M5 4.500v4" stroke="#2040c0" strokeWidth="2" />
      </Icon>
    ),
  },
  {
    name: '网络',
    icon: (
      <Icon>
        <path d="M1 12h2v3h-2zM4 10h2v5h-2zM7 8h2v7h-2z" fill="#fff" />
        <path d="M10 5h2v10h-2zM13 2h2v13h-2z" fill="#7fa0c4" />
      </Icon>
    ),
  },
  {
    name: '工行',
    icon: (
      <Icon>
        <path d="M0 0h16v16h-16z" fill="#f6e4e0" />
        <circle cx="8" cy="8" r="6.500" stroke="#c42020" strokeWidth="1.500" />
        <path d="M4.500 4.500h7M4.500 11.500h7M8 4.500v7M5 6.500h2M9 6.500h2M5 9.500h2M9 9.500h2" stroke="#c42020" strokeWidth="1.500" />
      </Icon>
    ),
  },
  { name: 'QQ 1', icon: <Penguin size="w-4 h-4" /> },
  { name: 'QQ 2', icon: <Penguin size="w-4 h-4" /> },
  {
    name: '更新',
    icon: (
      <Icon>
        <path d="M4 1h10v13h-10z" fill="#8cc4ee" stroke="#e8f4ff" />
        <path d="M6 5l3-1v4l-3 1zM10 4l3-1v4l-3 1z" fill="#3a9a4a" />
        <ellipse cx="8" cy="9" rx="7.500" ry="3" stroke="#f0b428" strokeWidth="1.500" transform="rotate(-20 8 9)" />
      </Icon>
    ),
  },
  {
    name: '操作中心',
    icon: (
      <Icon>
        <path d="M2 1v14" stroke="#fff" strokeWidth="1.500" />
        <path d="M3 2c4-1 5 2 11 0v7c-6 2-7-1-11 0z" fill="#fff" />
        <circle cx="11" cy="11" r="4.500" fill="#d83020" />
        <path d="M9 9l4 4M13 9l-4 4" stroke="#fff" strokeWidth="1.500" />
      </Icon>
    ),
  },
  {
    name: '电源',
    icon: (
      <Icon>
        <path d="M8 2H2.500v12H8" stroke="#fff" strokeWidth="1.600" />
        <path d="M4 1h3" stroke="#fff" strokeWidth="2" />
        <path d="M6 5h8v4l-2 2h-4l-2-2z" fill="#fff" />
        <path d="M8 2v3M12 2v3M10 11v4" stroke="#fff" strokeWidth="1.500" />
      </Icon>
    ),
  },
  {
    name: '音量',
    icon: (
      <Icon>
        <path d="M1 5h3l4-4v14l-4-4h-3z" fill="#fff" />
        <circle cx="11.500" cy="11" r="3.700" fill="#fff" stroke="#d02818" strokeWidth="1.600" />
        <path d="M9 8.500l5 5" stroke="#d02818" strokeWidth="1.600" />
      </Icon>
    ),
  },
];

function Taskbar() {
  return (
    <footer className={clsx('flex h-10 shrink-0 items-center border-t border-[#16364e] bg-[linear-gradient(90deg,#1c5c90_0%,#2d79ac_4%,#4aa3d6_12%,#4aa5dc_38%,#2b84c4_50%,#2278bd_58%,#2b74bb_65%,#1a4f82_69%,#17518a_75%,#1a4c84_88%,#153a68_100%)]', segoe)}>
      <button aria-label="开始" className="ml-2 shrink-0">
        <svg viewBox="0 0 38 38" className="h-[38px] w-[38px]" aria-hidden="true">
          <circle cx="19" cy="19" r="17.500" fill="#174f80" stroke="#8fb8d4" strokeWidth="1.500" />
          <path d="M3 20a16 16 0 0 1 32 0q-16 5-32 0z" fill="#7d9fb8" opacity=".7" />
          <ellipse cx="19" cy="30" rx="11" ry="5" fill="#28b0e8" opacity=".7" />
          <path d="M10 9q4-2 8.500 0l-2 8.500q-4-2-8.500 0z" fill="#ee6a2c" />
          <path d="M20 9.500q4 2 9.500 0l-2 8.500q-5 2-9.500 0z" fill="#98ca3c" />
          <path d="M7.500 19.500q4-2 8.500 0l-2 8.500q-4-2-8.500 0z" fill="#3c9ae8" />
          <path d="M17.500 20q4 2 9.500 0l-2 8.500q-5 2-9.500 0z" fill="#fccc3c" />
        </svg>
      </button>
      <div className="ml-3"><Grip /></div>
      <button aria-label="Internet Explorer" className={clsx(task, 'ml-2 w-[51px] from-[#dfeff9] to-[#a8d4ee]')}>
        <IeLogo size="w-8 h-8" />
      </button>
      <span className="h-[38px] w-[9px] rounded-r-xs border-r-2 border-l border-[#a8d4ee]" />
      <button aria-label="资源管理器" className={clsx(task, taskIdle, 'ml-0.5 w-[55px]')}>
        <svg viewBox="0 0 32 32" className="h-8 w-8" aria-hidden="true">
          <path d="M2 5h9l2 3h8l1-2h8v21H2z" fill="#efd27a" stroke="#c09a3c" />
          <path d="M2 10h28v17H2z" fill="#f9e8a4" />
          <path d="M4 3h6v2H4z" fill="#3cac4c" />
          <path d="M20 6h6v2h-6z" fill="#3c8cd8" />
          <path d="M7 31V20h18v11h-5v-6h-8v6z" fill="#8cc8ee" stroke="#4a90c4" />
        </svg>
      </button>
      <span className="h-[38px] w-[5px] border-r border-[#a8d4ee]" />
      <button aria-label="媒体播放器" className="flex w-[62px] justify-center">
        <svg viewBox="0 0 32 32" className="h-8 w-8" aria-hidden="true">
          <path d="M5 5h22v22H5z" fill="#8cc2e4" stroke="#c8e2f2" />
          <path d="M25 6l4 2v19l-4 1z" fill="#5c98c4" />
          <circle cx="14" cy="16" r="9" fill="#ee7820" stroke="#fbc090" />
          <path d="M11 10.500v11l9-5.500z" fill="#fff" />
        </svg>
      </button>
      <button aria-label="搜狗浏览器" className="flex w-16 justify-center">
        <svg viewBox="0 0 32 32" className="h-8 w-8" aria-hidden="true">
          <circle cx="16" cy="16" r="15" fill="#fff" />
          <circle cx="16" cy="16" r="13" fill="#1878c4" />
          <path d="M25 7C17 2 8 6 9 12c1 5 13 4 12 9-1 4-8 5-14 2" fill="none" stroke="#fff" strokeWidth="5.500" />
        </svg>
      </button>
      <button aria-label="QQ" className={clsx(task, taskIdle, 'w-[59px]')}><Penguin size="h-8 w-8" /></button>
      <button aria-label="画图" className={clsx(task, taskIdle, 'ml-[3px] w-[59px]')}>
        <svg viewBox="0 0 34 32" className="h-8 w-[34px]" aria-hidden="true">
          <path d="M3 18C3 10 12 6 20 8s9 8 8 13-5 2-8 3-2 5-7 5S3 25 3 18z" fill="#e2edf6" stroke="#90aac0" />
          <circle cx="9" cy="19" r="2.500" fill="#d84030" />
          <circle cx="12" cy="13" r="2.500" fill="#48a848" />
          <circle cx="19" cy="12" r="2.500" fill="#f0c030" />
          <circle cx="16" cy="21" r="3" fill="#4a9ad0" />
          <path d="M29 4L18 30" stroke="#d8822c" strokeWidth="3" />
          <path d="M30 1l3 4-4 5-3-3z" fill="#a8784c" />
        </svg>
      </button>
      <button aria-label="记事本" className={clsx(task, taskIdle, 'ml-[3px] w-[59px]')}>
        <svg viewBox="0 0 32 32" className="h-8 w-8" aria-hidden="true">
          <path d="M27 5l2 22-4 2z" fill="#8a7a50" />
          <path d="M10 5h17l-2 24-6-1z" fill="#f2f6f6" />
          <path d="M10 5h16l-7 21-17-3z" fill="#7cc4cc" stroke="#d8eef0" />
          <path d="M11 3v4M14 3v4M17 3v4M20 3v4M23 3v4M26 3v4" stroke="#555" />
        </svg>
      </button>
      <span className="flex-1" />
      <Grip />
      <div className="ml-2 flex h-8 items-start gap-1.5 pt-1">
        <button aria-label="键盘">
          <Icon>
            <path d="M1 7h14v7H1z" fill="#ddd" stroke="#666" />
            <path d="M3 9.500h10M3 11.500h10" stroke="#444" strokeDasharray="1 1" />
            <path d="M7 7c0-4 3-1 5-5" stroke="#ccc" />
          </Icon>
        </button>
        <button aria-label="帮助" className="flex h-[15px] w-[15px] items-center justify-center rounded-full border border-[#c8d8f4] bg-[#1a22b8] text-[11px] leading-3 font-bold text-white">?</button>
        <button aria-label="语言栏选项" className="ml-0.5">
          <Icon>
            <path d="M4.500 1.500h6v4h-6zM1.500 3.500h6v4h-6z" stroke="#fff" fill="#1a4c84" />
            <path d="M2 12h6l-3 3z" fill="#fff" />
          </Icon>
        </button>
      </div>
      <div className="ml-[29px] flex gap-2">
        {trayIcons.map((t) => (
          <button key={t.name} aria-label={t.name}>{t.icon}</button>
        ))}
      </div>
      <time className="ml-5 text-center text-xs leading-[18px] text-white">
        10:32
        <br />
        2012-09-22
      </time>
      <button aria-label="显示桌面" className="ml-3.5 h-[38px] w-[14px] border border-[#7d9cbc] bg-linear-to-b from-[#5c7c9e] to-[#1c4068]" />
    </footer>
  );
}

/* ---------- page ---------- */

const views = ['普通视图', '页面视图', '预览视图', '查询视图'];

export default function App() {
  const [view, setView] = useState(views[0]);

  return (
    <div className="flex h-screen flex-col overflow-hidden bg-[#eef5fc] text-black">
      <div className="shrink-0 bg-[linear-gradient(100deg,#a8cbe9_0%,#9fcbee_20%,#86b9e6_40%,#8ccbf3_52%,#79b7ea_58%,#86c3ef_70%,#4f84bb_74%,#6ea7dc_80%,#5488c0_84%,#8ebbe8_89%,#a5caee_100%)]">
        <TitleBar />
        <AddressBar />
      </div>
      <TabBar />
      <main className="mt-[5px] flex min-h-0 flex-1 border-t border-[#5f5f5f]">
        <div className="flex min-w-0 flex-1 flex-col border-l-2 border-[#8a8a8a]">
          <Toolbars />
          <div className="flex min-h-0 flex-1">
            <Designer />
            <div className="w-2 shrink-0 bg-linear-to-r from-[#d9e4fb] to-[#b0bdd6]" />
            <SidePanel />
          </div>
          <div className={clsx('flex h-[26px] shrink-0 items-start bg-[#ebf0fc] pt-0.5 pl-0.5', song)}>
            <div role="tablist" className="flex flex-1 items-start border-t border-black pl-5">
              {views.map((v) => (
                <button
                  key={v}
                  role="tab"
                  aria-selected={v === view}
                  onClick={() => setView(v)}
                  className={clsx('w-20 border-r border-[#8f949f] text-xs', v === view ? 'h-[21px] border-b bg-[#d9e4fb]' : 'mt-0.5 h-[18px]')}
                >
                  {v}
                </button>
              ))}
            </div>
          </div>
        </div>
        <div className="flex w-[19px] shrink-0 flex-col items-center justify-between border-l border-[#d8d8d8] bg-[#f0f0f0] py-[7px]">
          <button aria-label="页面向上"><Up color="#999" /></button>
          <button aria-label="页面向下"><Down color="#999" /></button>
        </div>
      </main>
      <div className="h-px shrink-0 bg-[#dfe4ee]" />
      <Taskbar />
    </div>
  );
}
